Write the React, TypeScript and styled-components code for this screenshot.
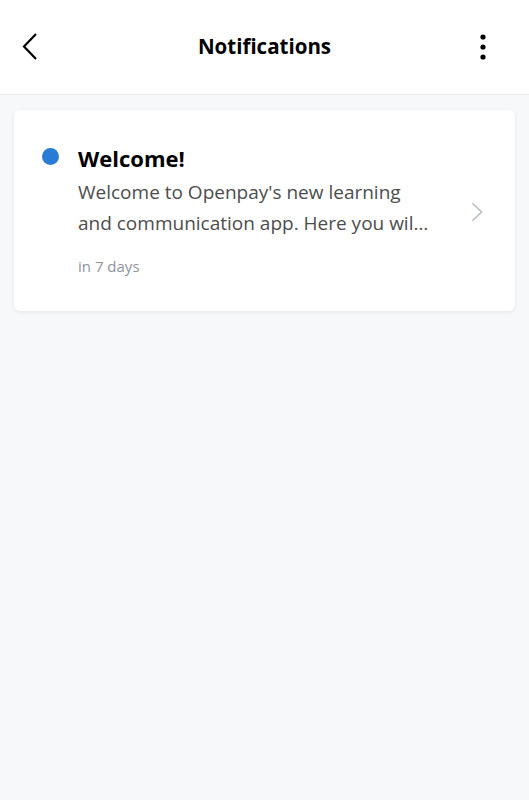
import styled, { createGlobalStyle } from 'styled-components'

const GlobalStyle = createGlobalStyle`
  html, body {
    margin: 0;
    padding: 0;
    background: #f7f8fa;
    font-family: "Open Sans", Lato, sans-serif;
  }
`

const Page = styled.div`
  min-height: 800px;
  background: #f7f8fa;
`

const Header = styled.header`
  height: 94px;
  background: #fff;
  border-bottom: 1px solid #e6e8eb;
  padding: 0 42px 0 20px;
  display: grid;
  grid-template-columns: 60px 1fr 60px;
  align-items: center;
`

const IconButton = styled.button<{ $align: 'start' | 'end' }>`
  border: none;
  background: none;
  padding: 0;
  height: 40px;
  display: flex;
  align-items: center;
  justify-self: ${p => p.$align};
  cursor: pointer;
`

const Title = styled.h1`
  margin: 0 0 2px 22px;
  text-align: center;
  font-size: 20.5px;
  font-weight: 700;
  color: #000;
`

const List = styled.main`
  padding: 15px 14px;
`

const Card = styled.div`
  background: #fff;
  border-radius: 6px;
  box-shadow: 0 1px 4px rgba(0, 0, 0, 0.08);
  min-height: 201px;
  box-sizing: border-box;
  padding: 35px 32px 32px 28px;
  display: grid;
  grid-template-columns: 36px 1fr 12px;
  align-items: start;
`

const Dot = styled.span<{ $unread: boolean }>`
  width: 17px;
  height: 17px;
  margin-top: 3px;
  border-radius: 50%;
  background: ${p => (p.$unread ? '#2a7bd5' : 'transparent')};
`

const Content = styled.div`
  min-width: 0;
  padding-right: 38px;
`

const CardTitle = styled.h2`
  margin: 0;
  font-size: 22px;
  font-weight: 700;
  color: #000;
  line-height: 26px;
`

const Body = styled.p`
  margin: 6px 0 0;
  font-size: 19px;
  line-height: 31px;
  color: #4d4d4d;
`

const BodyLine = styled.span`
  display: block;
  white-space: nowrap;
  overflow: hidden;
  text-overflow: ellipsis;
`

const Time = styled.div`
  margin-top: 17px;
  font-size: 15px;
  color: #8e949c;
`

const Chevron = styled.div`
  align-self: center;
  display: flex;
`

const BackIcon = () => (
  <svg width="20" height="30" viewBox="0 0 20 30">
    <path d="M16 2 L4 14.5 L16 27" fill="none" stroke="#000" strokeWidth="2.2" />
  </svg>
)

const MoreIcon = () => (
  <svg width="8" height="30" viewBox="0 0 8 30">
    <circle cx="4" cy="5" r="2.6" fill="#000" />
    <circle cx="4" cy="15" r="2.6" fill="#000" />
    <circle cx="4" cy="25" r="2.6" fill="#000" />
  </svg>
)

const ChevronIcon = () => (
  <svg width="13" height="22" viewBox="0 0 13 22">
    <path d="M1.5 1.5 L11.5 11 L1.5 20.5" fill="none" stroke="#b3bcc6" strokeWidth="1.6" />
  </svg>
)

const notifications = [
  {
    id: 1,
    title: 'Welcome!',
    lines: [
      "Welcome to Openpay's new learning",
      'and communication app. Here you will find everything you need.',
    ],
    time: 'in 7 days',
    unread: true,
  },
]

const App = () => {
  return (
    <Page>
      <GlobalStyle />
      <Header>
        <IconButton $align="start" aria-label="Back">
          <BackIcon />
        </IconButton>
        <Title>Notifications</Title>
        <IconButton $align="end" aria-label="More">
          <MoreIcon />
        </IconButton>
      </Header>
      <List>
        {notifications.map(n => (
          <Card key={n.id}>
            <Dot $unread={n.unread} />
            <Content>
              <CardTitle>{n.title}</CardTitle>
              <Body>
                {n.lines.map(line => (
                  <BodyLine key={line}>{line}</BodyLine>
                ))}
              </Body>
              <Time>{n.time}</Time>
            </Content>
            <Chevron>
              <ChevronIcon />
            </Chevron>
          </Card>
        ))}
      </List>
    </Page>
  )
}

export default App
